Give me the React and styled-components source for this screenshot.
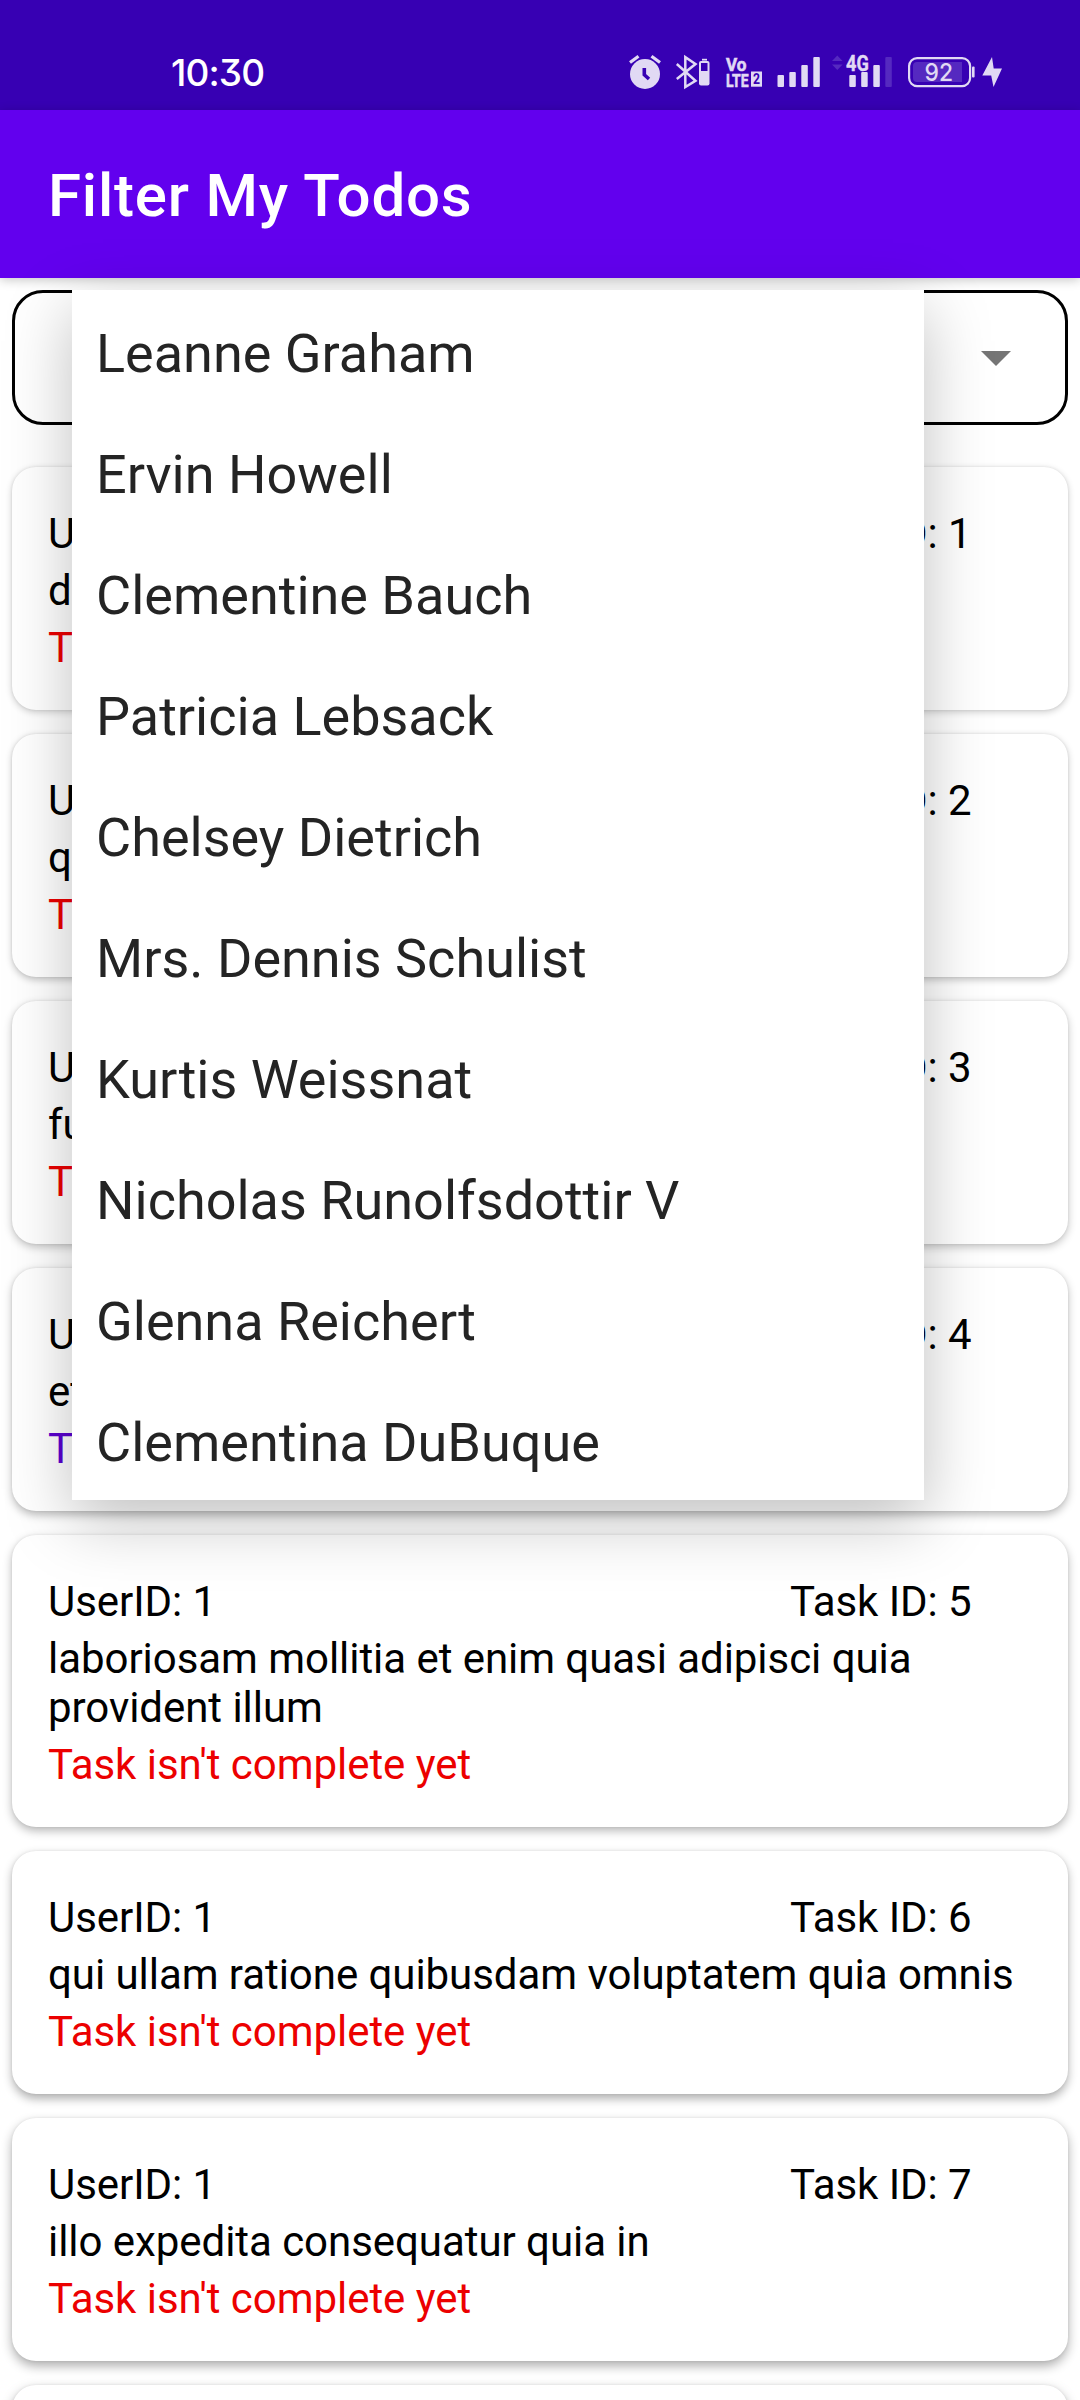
import React from 'react';
import styled, { createGlobalStyle } from 'styled-components';

const GlobalStyle = createGlobalStyle`
  * { box-sizing: border-box; }
  html, body { margin: 0; padding: 0; background: #fff; }
  body { font-family: Roboto, "Noto Sans", sans-serif; }
`;

const Screen = styled.div`
  width: 1080px;
  height: 2400px;
  overflow: hidden;
  display: flex;
  flex-direction: column;
  background: #fff;
`;

const StatusBar = styled.header`
  height: 110px;
  flex: none;
  display: flex;
  align-items: flex-start;
  justify-content: space-between;
  padding: 50px 74px 0 171px;
  background: #3700b3;
`;

const Clock = styled.span`
  font: 500 37px/46px Inter, sans-serif;
  font-feature-settings: "cv09";
  letter-spacing: -0.9px;
  color: #fff;
`;

const StatusIcons = styled.div`
  display: flex;
`;

const AppBar = styled.div`
  height: 168px;
  flex: none;
  padding: 51px 48px 0;
  background: #6200ee;
  box-shadow: 0 2px 10px rgba(0, 0, 0, 0.22);
`;

const Title = styled.h1`
  margin: 0;
  font-size: 60px;
  font-weight: 500;
  line-height: 70px;
  letter-spacing: 0.8px;
  color: #fff;
`;

const Content = styled.main`
  position: relative;
  display: flex;
  flex-direction: column;
  padding: 12px 12px 0;
`;

const Spinner = styled.div`
  height: 135px;
  flex: none;
  display: flex;
  align-items: flex-start;
  justify-content: flex-end;
  padding: 58px 54px 0 0;
  border: 3px solid #000;
  border-radius: 31px;
`;

const TodoList = styled.div`
  display: flex;
  flex-direction: column;
  gap: 24px;
  margin-top: 42px;
`;

const Card = styled.article`
  flex: none;
  min-height: 243px;
  padding: 42px 36px 38px;
  border-radius: 24px;
  background: #fff;
  box-shadow:
    0 ${(p) => 2 + p.$depth * 0.5}px ${(p) => 7 + p.$depth * 0.6}px rgba(0, 0, 0, ${(p) => 0.2 + p.$depth * 0.02}),
    0 0 3px rgba(0, 0, 0, 0.08);
  font-size: 42px;
  line-height: 49px;
  letter-spacing: -0.05px;
  color: #000;
`;

const IdRow = styled.div`
  display: flex;
  justify-content: space-between;
`;

const TaskId = styled.span`
  width: 242px;
`;

const Description = styled.p`
  margin: 8px 0;
`;

const Status = styled.div`
  color: ${(p) => (p.$done ? '#5a00d0' : '#ec0000')};
`;

const Popup = styled.ul`
  position: absolute;
  top: 12px;
  left: 72px;
  width: 852px;
  margin: 0;
  padding: 0;
  list-style: none;
  background: #fff;
  box-shadow: 0 20px 62px rgba(0, 0, 0, 0.25);
`;

const Option = styled.li`
  height: 121px;
  padding: 32px 24px 0;
  font-size: 54px;
  line-height: 64px;
  color: #242424;
`;

const FG = '#e1d9f4';
const DIM = '#5529c0';
const BG = '#3700b3';

const Icon = ({ x, w, children }) => (
  <svg width={w} height="44" viewBox={`${x} 50 ${w} 44`} fill={FG}>
    {children}
  </svg>
);

const narrow = {
  fontFamily: 'Roboto, sans-serif',
  fontWeight: 700,
  lengthAdjust: 'spacingAndGlyphs',
};

const AlarmIcon = () => (
  <Icon x={620} w={50}>
    <circle cx="645" cy="74" r="15" />
    <path d="M630 62.5l8.500-6.300M660 62.500l-8.500-6.300" stroke={FG} strokeWidth="3.200" />
    <path d="M644.300 68v6.800l4.700 4.200" stroke={BG} strokeWidth="3.600" fill="none" />
  </Icon>
);

const BluetoothIcon = () => (
  <Icon x={670} w={50}>
    <path d="M676.800 64L695.500 80.800 685.300 87V57.200L695.500 64 676.800 79" stroke={FG} strokeWidth="2.500" fill="none" />
    <rect x="702" y="58.800" width="5" height="1.800" />
    <rect x="699" y="61" width="10.500" height="24.500" rx="2" />
    <rect x="701" y="63" width="6.500" height="8" fill={BG} />
  </Icon>
);

const VolteIcon = () => (
  <Icon x={720} w={50}>
    <text x="726" y="71" fontSize="19" textLength="20.500" stroke={FG} strokeWidth="0.600" {...narrow}>Vo</text>
    <text x="726" y="86.500" fontSize="19" textLength="22.500" stroke={FG} strokeWidth="0.600" {...narrow}>LTE</text>
    <rect x="751" y="71.500" width="11" height="15.200" />
    <text x="753" y="83.800" fontSize="14" textLength="7" fill={BG} {...narrow}>2</text>
  </Icon>
);

const SignalIcon = () => (
  <Icon x={770} w={58}>
    <rect x="777.500" y="75" width="6.500" height="12" rx="1" />
    <rect x="789.300" y="72" width="6.500" height="15" rx="1" />
    <rect x="801.300" y="65" width="6.500" height="22" rx="1" />
    <rect x="813.300" y="57" width="6.500" height="30" rx="1" />
  </Icon>
);

const MobileDataIcon = () => (
  <Icon x={828} w={72}>
    <path d="M832 61h10.600l-5.300-5.500zM832 64.500h10.600l-5.300 5.500z" fill={DIM} />
    <text x="846" y="70.500" fontSize="21.500" textLength="22.800" stroke={FG} strokeWidth="0.400" {...narrow}>4G</text>
    <rect x="849.300" y="75" width="6.500" height="12" rx="1" />
    <rect x="861.200" y="72" width="6.500" height="15" rx="1" />
    <rect x="873.300" y="65" width="6.500" height="22" rx="1" />
    <rect x="885.300" y="57" width="6.500" height="30" rx="1" fill={DIM} />
  </Icon>
);

const BatteryIcon = () => (
  <Icon x={900} w={78}>
    <rect x="909.100" y="58.100" width="61" height="28" rx="8" fill="none" stroke={FG} strokeWidth="2.200" />
    <path d="M917 62h45v20h-45a4 4 0 0 1-4-4V66a4 4 0 0 1 4-4z" fill={DIM} />
    <rect x="972" y="66.500" width="2.600" height="11" rx="1" />
    <text x="924.500" y="81.200" fontSize="24.500" fontFamily="Inter, sans-serif" fontWeight="500" textLength="28.500" lengthAdjust="spacingAndGlyphs">92</text>
  </Icon>
);

const BoltIcon = () => (
  <Icon x={978} w={28}>
    <path d="M992 57l-9.700 18.500h8.900L993.500 87l8.500-18.500h-8.300z" />
  </Icon>
);

const DropdownArrow = () => (
  <svg width="30" height="15" viewBox="0 0 30 15">
    <path d="M0 0h30L15 15z" fill="#757575" />
  </svg>
);

const users = [
  'Leanne Graham',
  'Ervin Howell',
  'Clementine Bauch',
  'Patricia Lebsack',
  'Chelsey Dietrich',
  'Mrs. Dennis Schulist',
  'Kurtis Weissnat',
  'Nicholas Runolfsdottir V',
  'Glenna Reichert',
  'Clementina DuBuque',
];

const todos = [
  { id: 1, text: 'delectus aut autem' },
  { id: 2, text: 'quis ut nam facilis et officia qui' },
  { id: 3, text: 'fugiat veniam minus' },
  { id: 4, text: 'et porro tempora', done: true },
  { id: 5, text: 'laboriosam mollitia et enim quasi adipisci quia provident illum' },
  { id: 6, text: 'qui ullam ratione quibusdam voluptatem quia omnis' },
  { id: 7, text: 'illo expedita consequatur quia in' },
];

const TodoCard = ({ todo, depth }) => (
  <Card $depth={depth}>
    <IdRow>
      <span>UserID: 1</span>
      <TaskId>Task ID: {todo.id}</TaskId>
    </IdRow>
    <Description>{todo.text}</Description>
    <Status $done={todo.done}>{todo.done ? 'Task is complete' : "Task isn't complete yet"}</Status>
  </Card>
);

export default function App() {
  return (
    <Screen>
      <GlobalStyle />
      <StatusBar>
        <Clock>10:30</Clock>
        <StatusIcons>
          <AlarmIcon />
          <BluetoothIcon />
          <VolteIcon />
          <SignalIcon />
          <MobileDataIcon />
          <BatteryIcon />
          <BoltIcon />
        </StatusIcons>
      </StatusBar>
      <AppBar>
        <Title>Filter My Todos</Title>
      </AppBar>
      <Content>
        <Spinner>
          <DropdownArrow />
        </Spinner>
        <TodoList>
          {todos.map((todo, i) => (
            <TodoCard key={todo.id} todo={todo} depth={i} />
          ))}
          <Card $depth={todos.length} />
        </TodoList>
        <Popup>
          {users.map((name) => (
            <Option key={name}>{name}</Option>
          ))}
        </Popup>
      </Content>
    </Screen>
  );
}
